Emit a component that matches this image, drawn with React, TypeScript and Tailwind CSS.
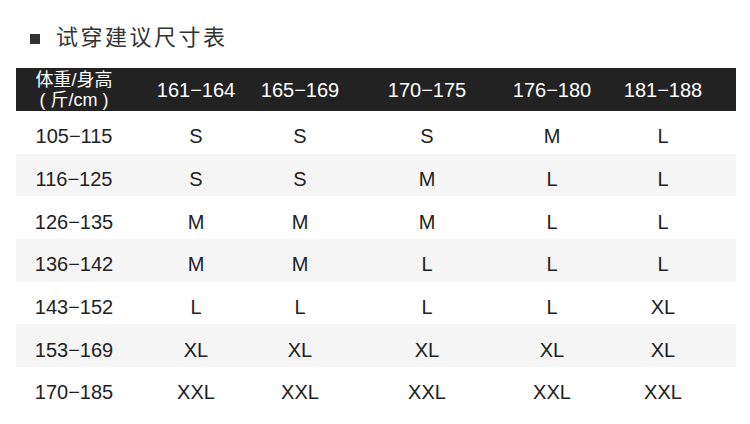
const HEIGHTS = ["161−164", "165−169", "170−175", "176−180", "181−188"];

const ROWS: [string, string[]][] = [
  ["105−115", ["S", "S", "S", "M", "L"]],
  ["116−125", ["S", "S", "M", "L", "L"]],
  ["126−135", ["M", "M", "M", "L", "L"]],
  ["136−142", ["M", "M", "L", "L", "L"]],
  ["143−152", ["L", "L", "L", "L", "XL"]],
  ["153−169", ["XL", "XL", "XL", "XL", "XL"]],
  ["170−185", ["XXL", "XXL", "XXL", "XXL", "XXL"]],
];

const COLS = "grid grid-cols-[116px_128px_80px_174px_76px_146px]";

export default function App() {
  return (
    <div
      className="h-[424px] w-[750px] bg-white"
      style={{ fontFamily: '"Liberation Sans", "Noto Sans CJK SC", sans-serif' }}
    >
      <div className="flex h-[68px] items-start pl-[30px] pt-[24px]">
        <div className="flex items-center gap-[16px] text-[#333]">
          <span className="mt-[2px] block h-[10px] w-[10px] bg-[#333]" />
          <span className="text-[22px] leading-[28px] tracking-[2.5px]">试穿建议尺寸表</span>
        </div>
      </div>

      <div className="ml-[16px] w-[720px]">
        <div className={`${COLS} h-[43px] bg-[#222] text-white`}>
          <div className="flex flex-col items-center justify-center text-[18px] leading-[20px]">
            <span>体重/身高</span>
            <span>( 斤/cm )</span>
          </div>
          {HEIGHTS.map((h) => (
            <div key={h} className="flex items-center justify-center text-[20px]">
              {h}
            </div>
          ))}
        </div>

        {ROWS.map(([w, sizes], i) => (
          <div
            key={w}
            className={`${COLS} h-[42.7px] text-[20px] text-[#222] ${i % 2 === 1 ? "bg-[#f5f5f5]" : "bg-white"}`}
          >
            <div className="flex items-center justify-center pt-[8px]">{w}</div>
            {sizes.map((s, j) => (
              <div key={j} className="flex items-center justify-center pt-[8px]">
                {s}
              </div>
            ))}
          </div>
        ))}
      </div>
    </div>
  );
}
